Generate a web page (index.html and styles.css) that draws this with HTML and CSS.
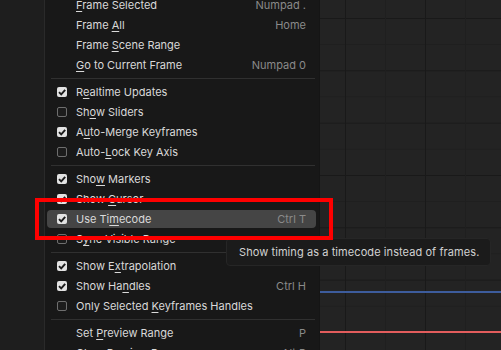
FILE: index.html
```html
<!DOCTYPE html>
<html>
  <head>
    <meta charset="UTF-8" />
    <title>Graph Editor View Menu</title>
    <link rel="stylesheet" href="styles.css">
  </head>
  <body>
    <!-- Left side strip of the editor -->
    <div id="side-strip"></div>

    <!-- View menu -->
    <div id="menu">
      <div class="item"><span class="label"><u>F</u>rame Selected</span><span class="shortcut">Numpad .</span></div>
      <div class="item"><span class="label">Frame <u>A</u>ll</span><span class="shortcut">Home</span></div>
      <div class="item"><span class="label">Frame <u>S</u>cene Range</span></div>
      <div class="item"><span class="label"><u>G</u>o to Current Frame</span><span class="shortcut">Numpad 0</span></div>
      <div class="separator"></div>
      <div class="item"><span class="check on"></span><span class="label">R<u>e</u>altime Updates</span></div>
      <div class="item"><span class="check"></span><span class="label">Sh<u>o</u>w Sliders</span></div>
      <div class="item"><span class="check on"></span><span class="label">A<u>u</u>to-Merge Keyframes</span></div>
      <div class="item"><span class="check"></span><span class="label">Auto-<u>L</u>ock Key Axis</span></div>
      <div class="separator"></div>
      <div class="item"><span class="check on"></span><span class="label">Sho<u>w</u> Markers</span></div>
      <div class="item"><span class="check on"></span><span class="label">Show <u>C</u>ursor</span></div>
      <div class="item active"><span class="check on"></span><span class="label">Use Ti<u>m</u>ecode</span><span class="shortcut">Ctrl T</span></div>
      <div class="item"><span class="check"></span><span class="label">S<u>y</u>nc Visible Range</span></div>
      <div class="separator"></div>
      <div class="item"><span class="check on"></span><span class="label">Show E<u>x</u>trapolation</span></div>
      <div class="item"><span class="check on"></span><span class="label">Show Ha<u>n</u>dles</span><span class="shortcut">Ctrl H</span></div>
      <div class="item"><span class="check"></span><span class="label">Only Selected <u>K</u>eyframes Handles</span></div>
      <div class="separator"></div>
      <div class="item"><span class="label">Set <u>P</u>review Range</span><span class="shortcut">P</span></div>
      <div class="item"><span class="label">Clear Preview Range</span><span class="shortcut">Alt P</span></div>
    </div>

    <!-- Graph area with grid and curves -->
    <div id="graph">
      <div class="curve blue" style="top: 291px"></div>
      <div class="curve red" style="top: 331px"></div>
    </div>

    <!-- Tooltip and annotation box -->
    <div id="tooltip">Show timing as a timecode instead of frames.</div>
    <div id="highlight-box"></div>
  </body>
</html>
```

FILE: styles.css
```css
body {
  margin: 0;
  padding: 0;
  width: 501px;
  height: 350px;
  overflow: hidden;
  display: flex;
  background-color: #1d1d1d;
  font-family: Inter, 'Noto Sans', sans-serif;
  font-size: 11px;
  color: #d9d9d9;
  position: relative;
}

#side-strip {
  width: 44px;
  flex-shrink: 0;
  background-color: #1e1e1e;
  border-right: 1px solid #2a2a2a;
}

/* Menu */
#menu {
  width: 274px;
  flex-shrink: 0;
  background-color: #181818;
  padding: 0 3px 0 2px;
  box-sizing: border-box;
  margin-top: -5px;
}

.item {
  height: 20px;
  display: flex;
  align-items: center;
  padding: 0 10px 0 29px;
  border-radius: 4px;
  position: relative;
}

.item .check {
  position: absolute;
  left: 10px;
  top: 5px;
}

.item.active {
  height: 18px;
  margin: 1px 0;
  background-color: #454545;
}

.item.active .check {
  top: 4px;
}

.label {
  flex-grow: 1;
  white-space: nowrap;
}

.label u {
  text-decoration-thickness: 1px;
  text-underline-offset: 2px;
}

.shortcut {
  color: #8a8a8a;
  white-space: nowrap;
}

.separator {
  height: 7px;
  display: flex;
  align-items: center;
  padding: 0 1px 0 4px;
}

.separator::after {
  content: '';
  flex-grow: 1;
  height: 1px;
  background-color: #303030;
}

/* Checkboxes */
.check {
  width: 10px;
  height: 10px;
  box-sizing: border-box;
  border: 1px solid #6e6e6e;
  border-radius: 2px;
  background-color: #1c1c1c;
}

.check.on {
  border: none;
  background-color: #e2e2e2;
  background-image: url("data:image/svg+xml,%3Csvg xmlns='http://www.w3.org/2000/svg' viewBox='0 0 10 10'%3E%3Cpath d='M2 5.2 L4.2 7.4 L8.2 2.8' fill='none' stroke='%231c1c1c' stroke-width='1.9'/%3E%3C/svg%3E");
  background-size: 10px 10px;
}

/* Graph */
#graph {
  flex-grow: 1;
  position: relative;
  border-left: 1px solid #151515;
  background-color: #232323;
  background-image:
    linear-gradient(to right, #191919 1px, transparent 1px),
    linear-gradient(to right, #1f1f1f 1px, transparent 1px),
    linear-gradient(to bottom, #191919 1px, transparent 1px),
    linear-gradient(to bottom, #1f1f1f 1px, transparent 1px);
  background-size: 80px 100%, 80px 100%, 100% 52.33px, 100% 52.33px;
  background-position: 25px 0, 65px 0, 0 18px, 0 44px;
}

.curve {
  position: absolute;
  left: 0;
  right: 0;
  height: 2px;
}

.curve.blue {
  background-color: #3d5c9c;
}

.curve.red {
  background-color: #e35d5d;
}

/* Tooltip */
#tooltip {
  position: absolute;
  left: 226px;
  top: 238px;
  width: 265px;
  height: 28px;
  box-sizing: border-box;
  padding-left: 12px;
  display: flex;
  align-items: center;
  background-color: #1b1b1b;
  border: 1px solid #262626;
  border-radius: 4px;
  color: #d2d2d2;
  letter-spacing: 0.08px;
  white-space: nowrap;
}

#highlight-box {
  position: absolute;
  left: 35px;
  top: 198px;
  width: 298px;
  height: 42px;
  box-sizing: border-box;
  border: 4px solid #ff0000;
}
```
